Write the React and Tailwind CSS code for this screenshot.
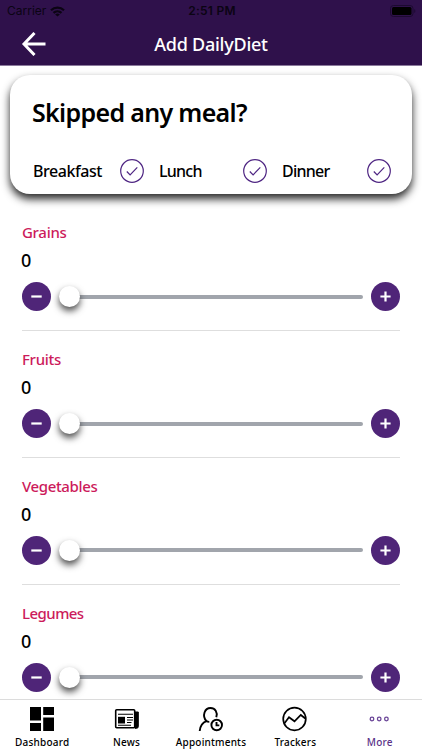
import React from 'react';

const foods = [
    { name: 'Grains', tracking: 'tracking-[-0.3px]' },
    { name: 'Fruits', tracking: 'tracking-[-0.3px]' },
    { name: 'Vegetables', tracking: 'tracking-[-0.37px]' },
    { name: 'Legumes', tracking: 'tracking-[-0.55px]' },
];

const StatusBar = () => (
    <div className="grid h-[22px] grid-cols-3 items-center px-[7px] font-['Inter',sans-serif] text-[12px] leading-[22px] text-[#0b0413]">
        <div className="flex items-center gap-[4px]">
            <span>Carrier</span>
            <svg width="15" height="11" viewBox="0 0 15 11" fill="none" stroke="#0b0413" strokeWidth="2.2">
                <path d="M1 4.3C4.7.7 10.3.7 14 4.3" />
                <path d="M3.5 6.9c2.3-2.2 5.7-2.2 8 0" />
                <path d="M7.5 10.6 5.2 8.4c1.3-1.2 3.3-1.2 4.6 0z" fill="#0b0413" stroke="none" />
            </svg>
        </div>
        <span className="whitespace-nowrap pl-[2px] text-center font-semibold tracking-[0.25px]">2:51 PM</span>
        <svg className="-mr-px justify-self-end" width="26" height="12" viewBox="0 0 26 12">
            <rect x="0.5" y="0.5" width="22.5" height="11" rx="3" fill="none" stroke="#1c0a30" />
            <rect x="2" y="2" width="19.5" height="8" rx="1.5" fill="#000" />
            <path d="M24.3 4v4c1.4-.6 1.4-3.4 0-4z" fill="#1c0a30" />
        </svg>
    </div>
);

const Header = () => (
    <header className="h-[66px] border-b border-[#8b7a9c] bg-[#2f114b]">
        <StatusBar />
        <div className="grid h-[43px] grid-cols-[60px_1fr_60px] items-center">
            <svg className="ml-[21px]" width="25" height="24" viewBox="0 0 25 24" fill="none" stroke="#fff" strokeWidth="3">
                <path d="M24.5 12H3M13.5 1 3 12 13.5 23" />
            </svg>
            <h1 className="text-center text-[18px] font-medium leading-[24px] tracking-[-0.25px] text-white">Add DailyDiet</h1>
        </div>
    </header>
);

const CheckCircle = () => (
    <svg className="shrink-0" width="24" height="24" viewBox="0 0 24 24" fill="none" stroke="#4f2683" strokeWidth="1.2">
        <circle cx="12" cy="12" r="11.3" />
        <path d="m6.8 12.5 3.3 3.3 7.2-7.5" />
    </svg>
);

const Meals = () => (
    <section className="mx-[10px] mt-[9px] h-[119px] rounded-[20px] bg-white pl-[22px] pt-[20px] shadow-[0_5px_8px_0_rgba(0,0,0,0.85)]">
        <h2 className="text-[25px] font-semibold leading-[34px] tracking-[-0.67px]">Skipped any meal?</h2>
        <div className="mt-[30px] flex h-[24px] items-center pl-px text-[16px] font-medium">
            <span className="w-[87px] tracking-[-0.45px]">Breakfast</span>
            <CheckCircle />
            <span className="ml-[15px] w-[84px] tracking-[-0.75px]">Lunch</span>
            <CheckCircle />
            <span className="ml-[15px] w-[85px] tracking-[-0.75px]">Dinner</span>
            <CheckCircle />
        </div>
    </section>
);

const RoundButton = ({ plus }) => (
    <button className="flex h-[29px] w-[29px] shrink-0 items-center justify-center rounded-full bg-[#4f2578]">
        <svg width="11" height="11" viewBox="0 0 11 11" fill="none" stroke="#fff" strokeWidth="2.2">
            <path d={plus ? 'M.4 5.5h10.2M5.5.4v10.2' : 'M.3 5.5h10.4'} />
        </svg>
    </button>
);

const FoodRow = ({ name, tracking }) => (
    <section className="mx-[22px] h-[126.8px] border-b border-[#dedede]">
        <h3 className={`pt-[17px] text-[15px] font-medium leading-[22px] text-[#cc1b5b] ${tracking}`}>{name}</h3>
        <p className="-ml-px mt-[5px] text-[18px] font-medium leading-[24px]">0</p>
        <div className="mt-[10px] flex items-center">
            <RoundButton />
            <div className="mx-[8px] flex flex-1 items-center">
                <div className="z-10 h-[21px] w-[21px] rounded-full bg-white shadow-[0_4px_7px_rgba(0,0,0,0.7)]" />
                <div className="-ml-[4px] h-[4px] flex-1 rounded-full bg-[#a1a5ac]" />
            </div>
            <RoundButton plus />
        </div>
    </section>
);

const DashboardIcon = () => (
    <svg width="26" height="26" viewBox="0 0 26 26">
        <path d="M1 1h11v13.5H1zM14.2 1H25v8H14.2zM1 17h11v8H1zM14.2 11.5H25V25H14.2z" />
    </svg>
);

const NewsIcon = () => (
    <svg width="26" height="26" viewBox="0 0 26 26" fill="none" stroke="#000">
        <rect x="1.7" y="3.7" width="19" height="18" rx="1" strokeWidth="1.6" />
        <path d="M21 6h3.3v14.5q0 1.8-1.8 1.8H21z" fill="#000" />
        <path d="M4 8.2h15M13 11.5h6M13 14h6M13 16.5h4.5M4 19.2h13" strokeWidth="1.1" />
        <path d="M4 10.8h7v6.7H4z" fill="#000" stroke="none" />
    </svg>
);

const AppointmentsIcon = () => (
    <svg width="26" height="26" viewBox="0 0 26 26" fill="none" stroke="#000" strokeWidth="1.9">
        <path d="M1.7 25c.5-4.800 2.600-8.300 6.800-9.800C3.600 9.500 6.800 2 12.500 2c4.600 0 7.400 4.500 5.800 9.200" />
        <path d="M8 15q1.500.9 3.300.9" />
        <circle cx="18.700" cy="19" r="5.300" />
        <path d="M18.500 16v3.400h2.800" />
    </svg>
);

const TrackersIcon = () => (
    <svg width="26" height="26" viewBox="0 0 26 26" fill="none" stroke="#000" strokeWidth="1.7">
        <circle cx="12.5" cy="13" r="11.3" />
        <path d="m2.3 17.500 4.700-6.200 5.500 4 6.300-6.300 4.500 3.500" />
    </svg>
);

const MoreIcon = () => (
    <svg width="26" height="26" viewBox="0 0 26 26" fill="none" stroke="#6b4698" strokeWidth="1.3">
        <circle cx="5" cy="13" r="1.8" />
        <circle cx="12.2" cy="13" r="1.8" />
        <circle cx="19.4" cy="13" r="1.8" />
    </svg>
);

const tabs = [
    { name: 'Dashboard', Icon: DashboardIcon },
    { name: 'News', Icon: NewsIcon },
    { name: 'Appointments', Icon: AppointmentsIcon },
    { name: 'Trackers', Icon: TrackersIcon },
    { name: 'More', Icon: MoreIcon, active: true },
];

const TabBar = () => (
    <nav className="z-20 grid h-[51px] shrink-0 grid-cols-5 border-t border-[#dcdcdc] bg-white">
        {tabs.map(({ name, Icon, active }) => (
            <div key={name} className={`flex flex-col items-center pt-[6px] ${active ? 'text-[#5b3388]' : 'text-black'}`}>
                <Icon />
                <span className="mt-[3px] whitespace-nowrap text-[10px] font-medium leading-[14px] tracking-[0.2px]">{name}</span>
            </div>
        ))}
    </nav>
);

const App = () => (
    <div className="flex h-[750px] w-[422px] flex-col overflow-hidden bg-white font-['Noto_Sans',sans-serif] text-black">
        <Header />
        <main className="flex-1 overflow-hidden">
            <Meals />
            <div className="mt-[10.4px]">
                {foods.map((food) => (
                    <FoodRow key={food.name} {...food} />
                ))}
            </div>
        </main>
        <TabBar />
    </div>
);

export default App;
